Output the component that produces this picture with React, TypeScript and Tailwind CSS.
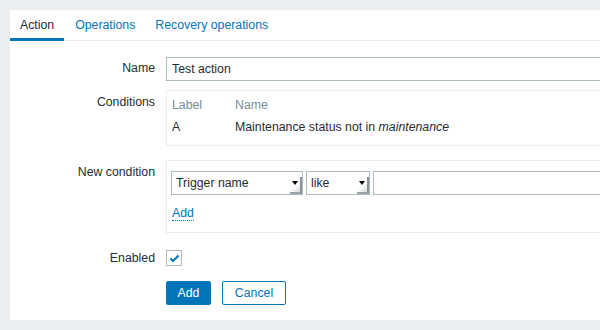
import React from "react";

function FakeSelect({ label, width }: { label: string; width: string }) {
  return (
    <div
      className={`relative h-[24px] ${width} border border-[#acbbc2] bg-white flex items-center pl-[4px] text-[#1f2c33]`}>
      <span>{label}</span>
      {/* old style dropdown corner */}
      <div className="absolute right-0 bottom-0 w-[12px] h-[17px] border-r-2 border-b-2 border-r-[#8a9396] border-b-[#9aa3a6] bg-[linear-gradient(135deg,#ffffff_55%,#d6dadc)]">
        <div className="absolute left-[2px] top-[4px] w-0 h-0 border-l-[3px] border-r-[3px] border-t-[4px] border-l-transparent border-r-transparent border-t-black" />
      </div>
    </div>
  );
}

export default function App() {
  return (
    <div
      className="h-[330px] w-[600px] overflow-hidden bg-[#ebeef0] pt-[10px] pl-[10px] text-[12.3px] leading-[14px] text-[#1f2c33]"
      style={{ fontFamily: '"Liberation Sans", Arial, sans-serif' }}>
      <div className="h-[310px] w-[620px] bg-white">
        {/* tabs */}
        <div className="flex h-[31px] border-b border-[#ebeef0]">
          <div className="h-[31px] px-[10px] pt-[8px] border-b-[3px] border-[#0275b8] -mb-px text-[#1f2c33]">
            Action
          </div>
          <div className="px-[11px] pt-[8px] text-[#0275b8]">Operations</div>
          <div className="px-[9px] pt-[8px] text-[#0275b8]">
            Recovery operations
          </div>
        </div>

        {/* form */}
        <div className="pt-[16px]">
          <div className="flex items-center">
            <div className="w-[145px] text-right pb-[2px]">Name</div>
            <div className="ml-[11px] flex-1 h-[24px] border border-[#acbbc2] flex items-center pl-[5px]">
              Test action
            </div>
          </div>

          <div className="flex mt-[9px]">
            <div className="w-[145px] text-right pt-[5px]">Conditions</div>
            <div className="ml-[11px] flex-1 h-[56px] border border-[#ebeef0] pl-[5px] pt-[7px]">
              <div className="flex text-[#768d99]">
                <div className="w-[63px]">Label</div>
                <div>Name</div>
              </div>
              <div className="flex mt-[8px]">
                <div className="w-[63px]">A</div>
                <div>
                  Maintenance status not in <i>maintenance</i>
                </div>
              </div>
            </div>
          </div>

          <div className="flex mt-[14px]">
            <div className="w-[145px] text-right pt-[5px]">New condition</div>
            <div className="ml-[11px] flex-1 h-[73px] border border-[#ebeef0] pl-[4px] pt-[10px]">
              <div className="flex gap-[3px]">
                <FakeSelect label="Trigger name" width="w-[132px]" />
                <FakeSelect label="like" width="w-[64px]" />
                <div className="flex-1 h-[24px] border border-[#acbbc2]" />
              </div>
              <div className="mt-[11px] pl-[1px]">
                <span className="text-[#0275b8] border-b border-dotted border-[#0275b8]">
                  Add
                </span>
              </div>
            </div>
          </div>

          <div className="flex items-center mt-[17px]">
            <div className="w-[145px] text-right">Enabled</div>
            <div className="ml-[11px] w-[16px] h-[16px] border border-[#acbbc2] flex items-center justify-center">
              <svg width="11" height="9" viewBox="0 0 11 9">
                <path
                  d="M1.5 4.5 L4 7 L9.5 1.5"
                  fill="none"
                  stroke="#0275b8"
                  strokeWidth="2"
                />
              </svg>
            </div>
          </div>

          <div className="flex mt-[15px] ml-[156px] gap-[11px]">
            <button className="h-[24px] w-[45px] rounded-[2px] bg-[#0275b8] text-white">
              Add
            </button>
            <button className="h-[24px] w-[64px] rounded-[2px] border border-[#0275b8] bg-white text-[#0275b8]">
              Cancel
            </button>
          </div>
        </div>
      </div>
    </div>
  );
}
